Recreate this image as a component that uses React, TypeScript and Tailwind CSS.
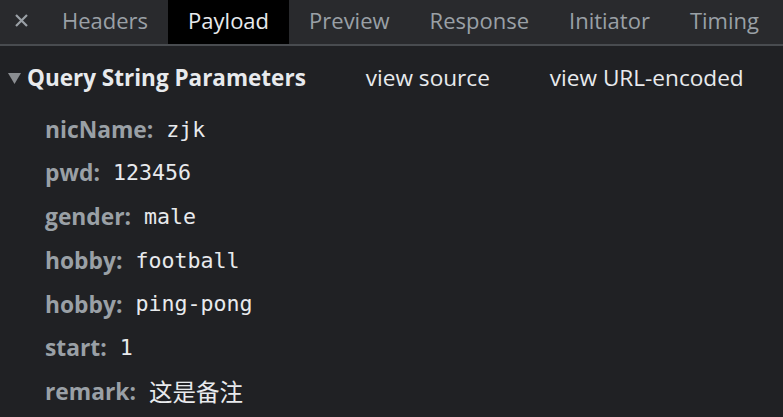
import React from "react";

const tabs = ["Headers", "Payload", "Preview", "Response", "Initiator", "Timing"];
const rows: [string, string, boolean][] = [
  ["nicName", "zjk", false],
  ["pwd", "123456", false],
  ["gender", "male", false],
  ["hobby", "football", false],
  ["hobby", "ping-pong", false],
  ["start", "1", false],
  ["remark", "这是备注", true],
];

export default function App() {
  return (
    <div
      className="w-[783px] h-[417px] overflow-hidden bg-[#202124] text-[#e8eaed]"
      style={{ fontFamily: '"Open Sans", "Noto Sans", sans-serif' }}
    >
      <div className="flex h-[46px] bg-[#292a2d] border-b-2 border-[#494c50] text-[22px]">
        <div className="w-[42px] flex items-center justify-center text-[#9aa0a6] pb-[3px]">
          <svg width="15" height="15" viewBox="0 0 15 15">
            <path d="M2 2 L13 13 M13 2 L2 13" stroke="#9aa0a6" strokeWidth="2.2" />
          </svg>
        </div>
        {tabs.map((t) => (
          <div
            key={t}
            className={
              t === "Payload"
                ? "px-[20px] pb-[3px] flex items-center bg-black text-[#e8eaed]"
                : "px-[20px] pb-[3px] flex items-center text-[#9aa0a6]"
            }
          >
            {t}
          </div>
        ))}
      </div>
      <div className="flex items-center h-[64px] pl-[8px]">
        <svg width="13" height="11" viewBox="0 0 13 11" className="mr-[6px]">
          <path d="M0 0 L13 0 L6.5 11 Z" fill="#8a8d91" />
        </svg>
        <span className="font-bold text-[#e8eaed] text-[22.5px]">Query String Parameters</span>
        <span className="ml-[60px] text-[22.6px]">view source</span>
        <span className="ml-[60px] text-[22.6px]">view URL-encoded</span>
      </div>
      <div className="flex flex-col pl-[45px] -mt-[2px]">
        {rows.map(([k, v, cjk], i) => (
          <div key={i} className="flex items-center h-[43.7px] text-[22.8px]">
            <span className="font-bold text-[#9aa0a6]">{k}:</span>
            {cjk ? (
              <span
                className="ml-[13px] text-[#e8eaed] text-[23.5px]"
                style={{ fontFamily: '"Noto Sans CJK SC", sans-serif' }}
              >
                {v}
              </span>
            ) : (
              <span
                className="ml-[13px] text-[#e8eaed] text-[21.6px]"
                style={{ fontFamily: '"DejaVu Sans Mono", monospace' }}
              >
                {v}
              </span>
            )}
          </div>
        ))}
      </div>
    </div>
  );
}
